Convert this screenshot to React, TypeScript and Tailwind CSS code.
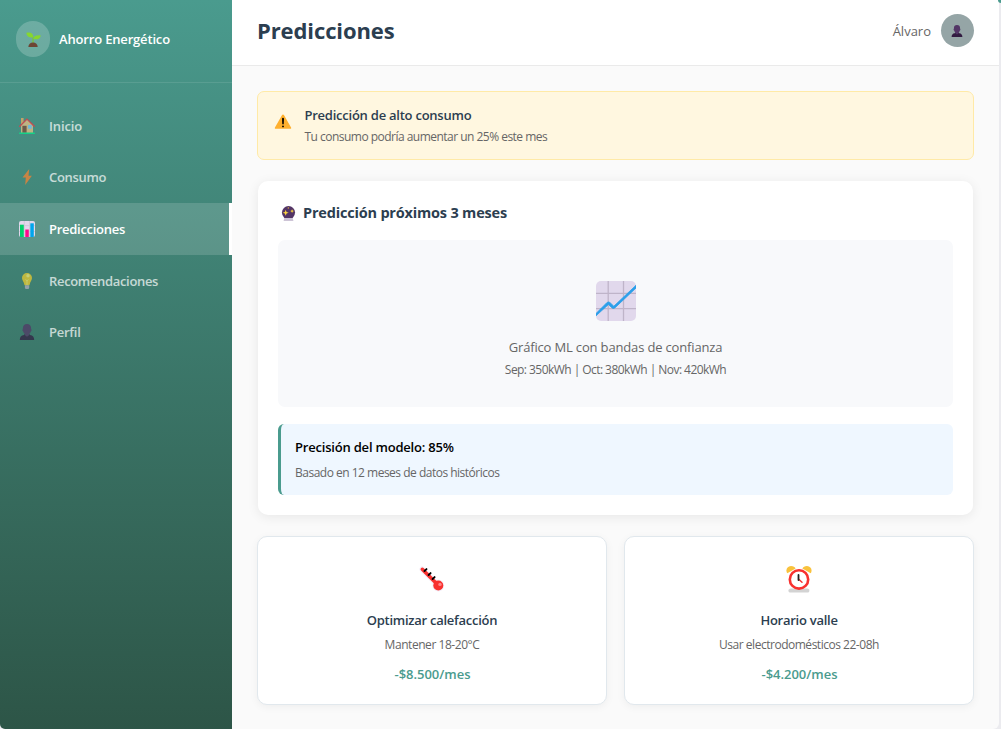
import type { ReactNode } from 'react';

type IconProps = { className?: string };

function Sprout({ className }: IconProps) {
  return (
    <svg viewBox="0 0 16 16" className={className}>
      <path d="M7.500 12V5.500" stroke="#7cc42f" strokeWidth="1.300" fill="none" />
      <path d="M.3 1C4 0 7.500 1 7.900 5.600 4.200 6.400.9 5.200.3 1Z" fill="#86d72f" />
      <path d="M15.700 3.600C15.200 7.400 11.500 8.600 7.900 7.400 8.200 4.300 11 3.200 15.700 3.600Z" fill="#86d72f" />
      <path d="M2.500 16c0-2.900 2.100-4.800 5-4.800s5 1.900 5 4.800Z" fill="#6d4534" />
    </svg>
  );
}

function House({ className }: IconProps) {
  return (
    <svg viewBox="0 0 16 16" className={className}>
      <rect x="2" y="0" width="2.600" height="6" fill="#f3ad61" />
      <path d="M2 7.500 8 1.500l6 6V15H2Z" fill="#f3c384" />
      <path d="M.7 8.200 8 1.100l7.300 7.100" stroke="#f92f40" strokeWidth="1.300" fill="none" strokeLinecap="round" />
      <rect x="3.400" y="7.800" width="4.200" height="7" fill="#7d4533" />
      <rect x="9" y="7" width="3.700" height="3.700" fill="#83cbff" />
      <rect x="0" y="14.500" width="16" height="1.500" rx=".7" fill="#00f08a" />
    </svg>
  );
}

function Bolt({ className }: IconProps) {
  return (
    <svg viewBox="0 0 16 16" className={className}>
      <path d="M10.200 0 3.500 8.400h3.300L6.200 16l6.700-9.200H9.500Z" fill="#ff822d" />
    </svg>
  );
}

function BarChart({ className }: IconProps) {
  return (
    <svg viewBox="0 0 16 16" className={className}>
      <rect width="16" height="16" rx="2" fill="#e1d8ec" />
      <path d="M5.300 0v16M10.500 0v16M0 4.600h16M0 10.500h16" stroke="#cdc4d6" strokeWidth=".8" />
      <path d="M1 3.700h3.800V16H1Z" fill="#00d26a" />
      <path d="M6.300 8.500h3.500V16H6.300Z" fill="#ff0a8a" />
      <path d="M11.300 2.300h3.500V16h-3.500Z" fill="#00a6ed" />
    </svg>
  );
}

function Bulb({ className }: IconProps) {
  return (
    <svg viewBox="0 0 16 16" className={className}>
      <path d="M8 0a5 5 0 0 0-5 5c0 2.200 1.800 3.500 2.300 6.500.1.700.5 1 1.200 1h3c.7 0 1.100-.3 1.200-1C11.200 8.500 13 7.200 13 5a5 5 0 0 0-5-5Z" fill="#f5d02b" />
      <path d="M6.500 6.500 8 7.800l1.500-1.300M8 8v4" stroke="#fff478" strokeWidth=".8" fill="none" />
      <circle cx="9" cy="2.800" r="1.700" fill="#fff07a" />
      <path d="M5.900 12.300h4.300v2.200c0 .9-.5 1.500-1.300 1.500H7.200c-.8 0-1.300-.6-1.300-1.500Z" fill="#b5b0c2" />
    </svg>
  );
}

function Bust({ className }: IconProps) {
  return (
    <svg viewBox="0 0 16 16" className={className}>
      <path d="M.8 16c0-2.800 1.400-4.600 4.200-4.900l1-1.300h4l1 1.300c2.800.3 4.200 2.100 4.200 4.900Z" fill="#321b41" />
      <path d="M8 0C5.300 0 3.900 1.700 3.900 4v1c-.7.300-.6 2 .3 2.400C4.700 9.200 6 10 6 10v1.300L8 12.700l2-1.400V10s1.300-.8 1.800-2.600c.9-.4 1-2.100.3-2.400V4c0-2.300-1.400-4-4.100-4Z" fill="#533566" />
    </svg>
  );
}

function Warning({ className }: IconProps) {
  return (
    <svg viewBox="0 0 18 16" className={className}>
      <path d="M8 1.100a1.150 1.150 0 0 1 2 0l7.600 13.200c.4.700 0 1.400-.8 1.400H1.200c-.8 0-1.200-.7-.8-1.400Z" fill="#ffb02e" />
      <path d="M8 5.100c0-.6.400-1 1-1s1 .4 1 1l-.2 5.400c0 .5-.3.800-.8.800s-.8-.3-.8-.8Z" fill="#000" />
      <circle cx="9" cy="13.200" r="1" fill="#000" />
    </svg>
  );
}

function CrystalBall({ className }: IconProps) {
  return (
    <svg viewBox="0 0 16 16" className={className}>
      <circle cx="8" cy="7" r="7" fill="#533566" />
      <path d="M3.500 12.800h9l.8 3.200H2.700Z" fill="#cdc4d6" />
      <path d="m5 4 .9 2.300 2.300.9-2.300.9L5 10.400l-.9-2.300-2.300-.9 2.300-.9Z" fill="#fcd53f" />
      <path d="m11.800 3.400.6 1.400 1.400.6-1.400.6-.6 1.400-.6-1.400-1.400-.6 1.400-.6Z" fill="#fcd53f" />
      <circle cx="7.800" cy="2" r=".7" fill="#f9c23c" />
    </svg>
  );
}

function LineChart({ className }: IconProps) {
  return (
    <svg viewBox="0 0 40 40" className={className}>
      <rect width="40" height="40" rx="5" fill="#e1d8ec" />
      <path d="M12.200 0v40M27.500 0v40M0 12.300h40M0 27.600h40" stroke="#bfb4c9" strokeWidth="1.300" />
      <path d="M0 32.500v2.300L12.400 23.600l3.700 3.300q1.500 1.100 3-.2L40 7V4.300L17.800 25.200l-3.900-3.700q-1.500-1.200-3.100.2Z" fill="#2b9fea" stroke="#2b9fea" strokeWidth=".8" />
    </svg>
  );
}

function Thermometer({ className }: IconProps) {
  return (
    <svg viewBox="0 0 26 26" className={className}>
      <path d="M3.200 3.200 18.500 18.500" stroke="#f3eef8" strokeWidth="5.500" strokeLinecap="round" />
      <circle cx="19.300" cy="19.500" r="5.900" fill="#f3eef8" />
      <path d="M3.300 3.300 18 18" stroke="#f8312f" strokeWidth="3.500" strokeLinecap="round" />
      <circle cx="19.300" cy="19.500" r="5" fill="#f8312f" />
      <circle cx="21" cy="18.400" r="1.700" fill="#ff8687" />
      <path d="m5.500 5 2-1.900M9.600 9l2-1.900M13.600 13l2-1.900" stroke="#000" strokeWidth="1.900" strokeLinecap="round" />
    </svg>
  );
}

function AlarmClock({ className }: IconProps) {
  return (
    <svg viewBox="0 0 26 28" className={className}>
      <path d="M5 23.500h16c1.800 0 2.400 1 2.400 2.200 0 1.300-1 1.800-2.400 1.800H5c-1.500 0-2.600-.5-2.600-1.800 0-1.200.8-2.200 2.600-2.200Z" fill="#d3d3d3" />
      <path d="M1.300 8.200C-.7 5.200.900 1 5 .9c2.300 0 4 1.100 4.600 2.700Z" fill="#f9c23c" />
      <path d="M24.700 8.200C26.700 5.200 25.100 1 21 .9c-2.300 0-4 1.100-4.600 2.700Z" fill="#f9c23c" />
      <circle cx="13" cy="14.400" r="9.200" fill="#fff" stroke="#f8312f" strokeWidth="2.600" />
      <path d="m13 14.500 3 2.700" stroke="#f8312f" strokeWidth="1.500" strokeLinecap="round" />
      <path d="M12.500 10v5" stroke="#212121" strokeWidth="1.800" strokeLinecap="round" />
    </svg>
  );
}

type NavItem = { label: string; icon: ReactNode; tracking: string; active?: boolean };

const navItems: NavItem[] = [
  { label: 'Inicio', icon: <House className="size-4" />, tracking: 'tracking-[-0.15px]' },
  { label: 'Consumo', icon: <Bolt className="size-4" />, tracking: 'tracking-[-0.3px]' },
  { label: 'Predicciones', icon: <BarChart className="size-4" />, tracking: 'tracking-[-0.28px]', active: true },
  { label: 'Recomendaciones', icon: <Bulb className="size-4" />, tracking: 'tracking-[-0.33px]' },
  { label: 'Perfil', icon: <Bust className="size-4" />, tracking: 'tracking-[-0.25px]' },
];

function Sidebar() {
  return (
    <aside className="flex w-[232px] shrink-0 flex-col rounded-bl-[5px] bg-linear-to-b from-[#4a9b8e] to-[#2d5547]">
      <div className="flex h-[83px] items-center gap-[9px] border-b border-white/10 pb-1 pl-4">
        <div className="flex h-9 w-[34px] items-center justify-center rounded-full bg-white/20">
          <Sprout className="size-[15px]" />
        </div>
        <span className="pt-[2px] text-[13px] font-semibold whitespace-nowrap text-white tracking-[-0.17px]">Ahorro Energético</span>
      </div>
      <nav className="flex flex-col pt-[17px]">
        {navItems.map((item) => (
          <a
            key={item.label}
            className={
              item.active
                ? 'flex h-[51.6px] items-center gap-[14px] border-r-[3px] border-white bg-white/15 pl-[19px] text-white'
                : 'flex h-[51.6px] items-center gap-[14px] pl-[19px] text-white opacity-70'
            }
          >
            {item.icon}
            <span className={`pt-[1.5px] text-[13px] font-semibold whitespace-nowrap ${item.tracking}`}>{item.label}</span>
          </a>
        ))}
      </nav>
    </aside>
  );
}

type TipProps = { icon: ReactNode; title: string; text: string; saving: string; textTracking: string };

function TipCard({ icon, title, text, saving, textTracking }: TipProps) {
  return (
    <article className="flex h-[169px] flex-1 flex-col items-center rounded-[10px] border border-[#e1e8ed] bg-white pt-[27px] whitespace-nowrap shadow-[0_2px_8px_rgba(0,0,0,0.05)]">
      <div className="flex h-7 items-center pt-px">{icon}</div>
      <h3 className="mt-[18px] text-[13px] leading-5 font-semibold text-[#2c3e50] tracking-[-0.26px]">{title}</h3>
      <p className={`mt-[6px] text-[12px] leading-[18px] text-[#666] ${textTracking}`}>{text}</p>
      <p className="mt-[10px] pl-px text-[13px] leading-5 font-semibold text-[#4a9b8e] tracking-[-0.03px]">{saving}</p>
    </article>
  );
}

export default function App() {
  return (
    <div className="relative flex h-[729px] w-[1001px] overflow-hidden bg-[#ebebef] pr-[2px] font-['Open_Sans','Noto_Sans',sans-serif]">
      <Sidebar />
      <main className="flex min-w-0 flex-1 flex-col rounded-br-[6px] bg-[#fafafa]">
        <header className="flex h-[66px] items-center justify-between border-b border-[#eaeaea] bg-white pr-[25px] pb-1 pl-[25px]">
          <h1 className="text-[22px] font-bold text-[#2c3e50] tracking-[-0.1px]">Predicciones</h1>
          <div className="flex items-center gap-[10px]">
            <span className="pt-[2px] text-[13px] font-medium text-[#666]">Álvaro</span>
            <div className="flex size-[33px] items-center justify-center rounded-full bg-[#95a5a6]">
              <Bust className="mr-px mt-px size-3" />
            </div>
          </div>
        </header>
        <div className="flex flex-col pt-[25px] pr-[25px] pl-[25px]">
          <section className="flex h-[69px] items-center gap-[12.5px] rounded-[7px] border border-[#ffeaa7] bg-[#fff7e0] pl-[16px]">
            <Warning className="mt-[-9px] h-[15px] w-[18px]" />
            <div className="whitespace-nowrap">
              <h2 className="text-[13px] leading-[21px] font-semibold text-[#2c3e50] tracking-[-0.24px]">Predicción de alto consumo</h2>
              <p className="mt-px text-[12px] leading-5 text-[#666] tracking-[-0.52px]">Tu consumo podría aumentar un 25% este mes</p>
            </div>
          </section>

          <section className="mx-px mt-[21px] flex h-[334px] flex-col rounded-[10px] bg-white px-5 pt-5 shadow-[0_2px_12px_rgba(0,0,0,0.08)]">
            <h2 className="flex h-6 items-center gap-[7px] pl-[3px] text-[14.5px] font-bold whitespace-nowrap text-[#2c3e50]">
              <CrystalBall className="size-[15px]" />
              <span className="pb-px tracking-[-0.19px]">Predicción próximos 3 meses</span>
            </h2>
            <div className="mt-[15px] flex h-[167px] flex-col items-center rounded-[7px] bg-[#f8f9fb] pt-[41px] text-[#666]">
              <LineChart className="size-10" />
              <p className="mt-[16px] text-[13px] leading-[21px] tracking-[-0.16px]">Gráfico ML con bandas de confianza</p>
              <p className="mt-[2px] text-[12px] leading-5 tracking-[-0.55px]">Sep: 350kWh | Oct: 380kWh | Nov: 420kWh</p>
            </div>
            <div className="mt-[17px] h-[71px] rounded-[6px] border-l-[3px] border-[#4a9b8e] bg-[#eff7ff] pt-[13px] pl-[14px]">
              <p className="text-[13px] leading-[21px] font-semibold text-black tracking-[-0.2px]">Precisión del modelo: 85%</p>
              <p className="mt-[5px] text-[12px] leading-5 text-[#666] tracking-[-0.5px]">Basado en 12 meses de datos históricos</p>
            </div>
          </section>

          <section className="mt-[21px] flex gap-[17px]">
            <TipCard
              icon={<Thermometer className="size-[26px]" />}
              title="Optimizar calefacción"
              text="Mantener 18-20°C"
              saving="-$8.500/mes"
              textTracking="tracking-[-0.45px]"
            />
            <TipCard
              icon={<AlarmClock className="h-7 w-[26px]" />}
              title="Horario valle"
              text="Usar electrodomésticos 22-08h"
              saving="-$4.200/mes"
              textTracking="tracking-[-0.48px]"
            />
          </section>
        </div>
      </main>
      <span className="absolute top-0 right-0 h-[3px] w-[3px] rounded-bl-[3px] bg-[#4a9b8e]" />
    </div>
  );
}
